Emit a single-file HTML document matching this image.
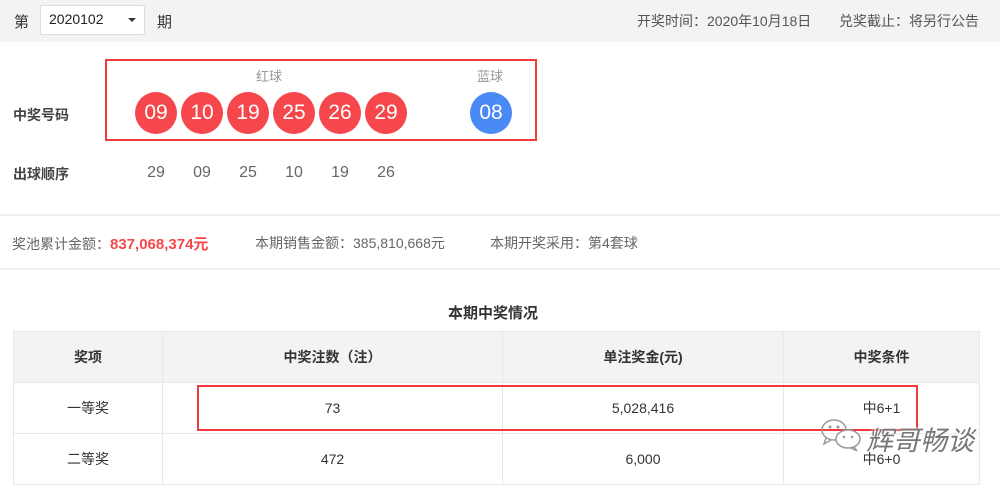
<!DOCTYPE html>
<html><head><meta charset="utf-8"><style>
*{margin:0;padding:0;box-sizing:border-box}
body{width:1000px;height:479px;overflow:hidden;background:#fff;font-family:"Liberation Sans","Noto Sans CJK SC",sans-serif;position:relative;color:#333}
.a{position:absolute;white-space:nowrap}
.ball{position:absolute;width:42px;height:42px;border-radius:50%;background:#f5474c;color:#fff;font-size:21px;line-height:42px;text-align:center;top:92px}
.n{position:absolute;top:164px;font-size:16px;color:#666;width:40px;text-align:center}
table{position:absolute;left:13px;top:331px;width:967px;border-collapse:collapse;font-size:14px;color:#333}
td{border:1px solid #e8e8e8;text-align:center;height:51px}
tr.h td{background:#f3f3f3;font-weight:bold}
</style></head><body>
<div class="a" style="left:0;top:0;width:1000px;height:42px;background:#f3f3f3"></div>
<div class="a" style="left:14px;top:11px;font-size:15px">第</div>
<div class="a" style="left:40px;top:5px;width:105px;height:30px;background:#fff;border:1px solid #ddd;border-radius:2px"></div>
<div class="a" style="left:49px;top:11px;font-size:14px;color:#222">2020102</div>
<div class="a" style="left:128px;top:18px;border-left:4px solid transparent;border-right:4px solid transparent;border-top:4px solid #333"></div>
<div class="a" style="left:157px;top:11px;font-size:15px">期</div>
<div class="a" style="left:637px;top:11px;font-size:14px;color:#555">开奖时间：2020年10月18日</div>
<div class="a" style="left:839px;top:11px;font-size:14px;color:#555">兑奖截止：将另行公告</div>

<div class="a" style="left:105px;top:59px;width:432px;height:82px;border:2px solid #f23a3c"></div>
<div class="a" style="left:256px;top:66px;font-size:13px;color:#999">红球</div>
<div class="a" style="left:477px;top:66px;font-size:13px;color:#999">蓝球</div>
<div class="a" style="left:13px;top:105px;font-size:14px;font-weight:bold;color:#444">中奖号码</div>
<div class="ball" style="left:135px">09</div>
<div class="ball" style="left:181px">10</div>
<div class="ball" style="left:227px">19</div>
<div class="ball" style="left:273px">25</div>
<div class="ball" style="left:319px">26</div>
<div class="ball" style="left:365px">29</div>
<div class="ball" style="left:470px;background:#4a8af4">08</div>

<div class="a" style="left:13px;top:164px;font-size:14px;font-weight:bold;color:#444">出球顺序</div>
<div class="n" style="left:136px">29</div>
<div class="n" style="left:182px">09</div>
<div class="n" style="left:228px">25</div>
<div class="n" style="left:274px">10</div>
<div class="n" style="left:320px">19</div>
<div class="n" style="left:366px">26</div>

<div class="a" style="left:0;top:214px;width:1000px;height:2px;background:#f1f1f1"></div>
<div class="a" style="left:0;top:268px;width:1000px;height:2px;background:#f1f1f1"></div>
<div class="a" style="left:12px;top:233px;font-size:14px;color:#666">奖池累计金额：<b style="color:#f5474c;font-size:15px">837,068,374元</b></div>
<div class="a" style="left:255px;top:233px;font-size:14px;color:#666">本期销售金额：385,810,668元</div>
<div class="a" style="left:490px;top:233px;font-size:14px;color:#666">本期开奖采用：第4套球</div>

<div class="a" style="left:448px;top:302px;font-size:15px;font-weight:bold;color:#333">本期中奖情况</div>
<table>
<tr class="h"><td style="width:149px">奖项</td><td style="width:340px">中奖注数（注）</td><td style="width:281px">单注奖金(元)</td><td>中奖条件</td></tr>
<tr><td>一等奖</td><td>73</td><td>5,028,416</td><td>中6+1</td></tr>
<tr><td>二等奖</td><td>472</td><td>6,000</td><td>中6+0</td></tr>
</table>
<div class="a" style="left:197px;top:385px;width:721px;height:46px;border:2px solid #f23a3c"></div>
<svg class="a" style="left:820px;top:418px" width="44" height="34" viewBox="0 0 44 34"><g fill="none" stroke="#999" stroke-width="1.5"><ellipse cx="14" cy="12" rx="12" ry="10"/><path d="M6 20 L4 26 L11 22"/><ellipse cx="28" cy="21" rx="12" ry="9" fill="#fff"/><path d="M34 29 L37 33 L31 30"/></g><g fill="#999"><circle cx="10" cy="9" r="1.5"/><circle cx="18" cy="9" r="1.5"/><circle cx="24" cy="19" r="1.3"/><circle cx="32" cy="19" r="1.3"/></g></svg>
<div class="a" style="left:866px;top:419px;font-size:27px;font-style:italic;color:#777;text-shadow:0 0 2px #fff,0 0 2px #fff">辉哥畅谈</div>
</body></html>
